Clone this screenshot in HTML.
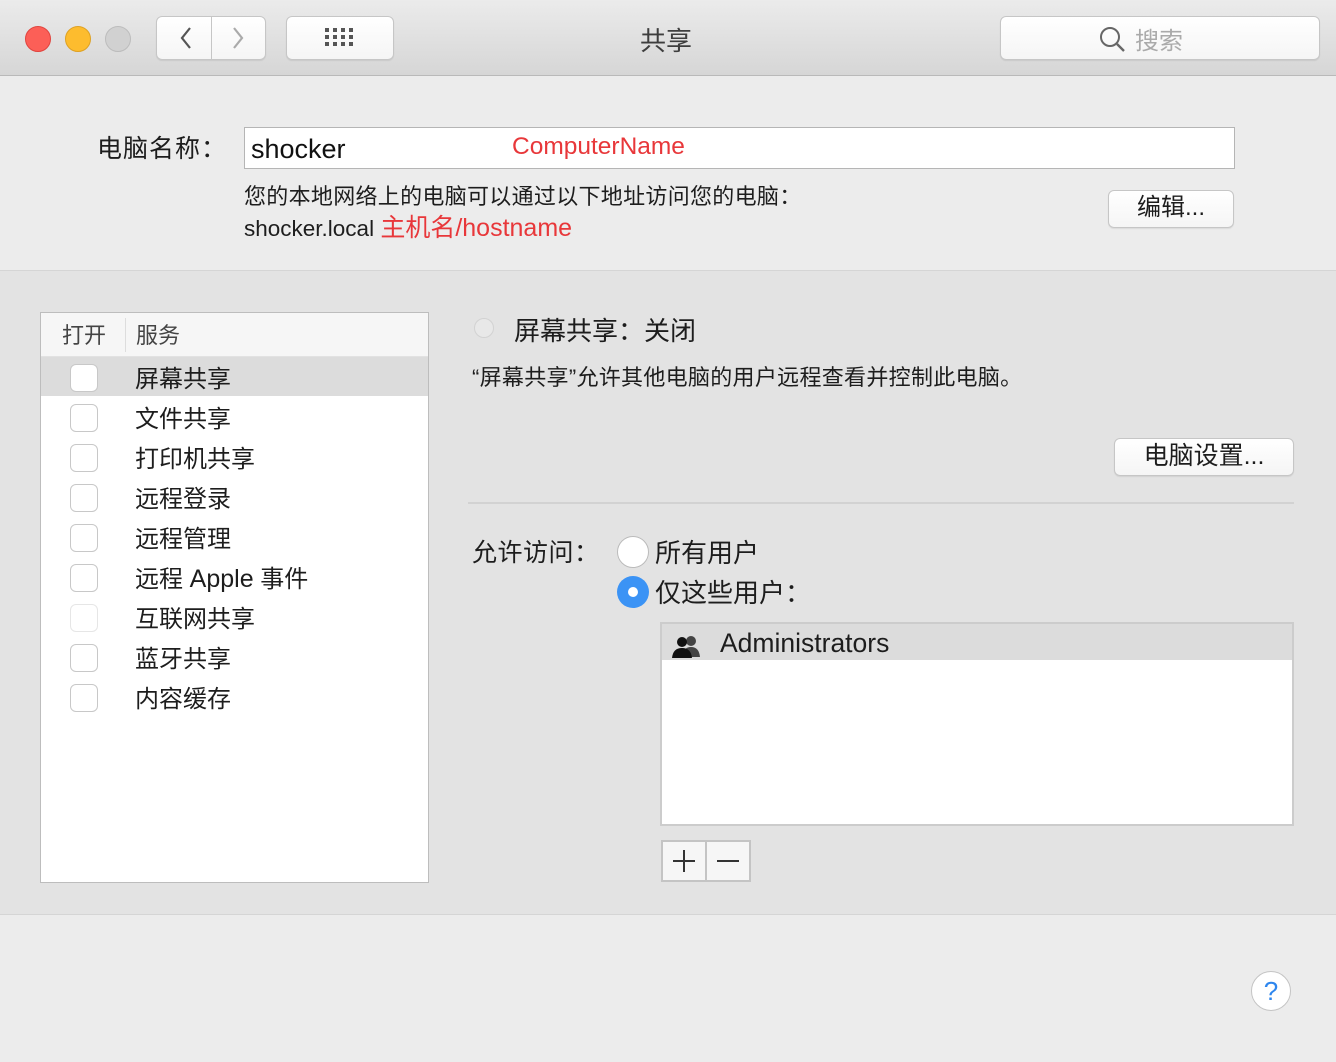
<!DOCTYPE html>
<html><head><meta charset="utf-8"><style>
*{margin:0;padding:0;box-sizing:border-box}
body{width:1336px;height:1062px;background:#ececec;font-family:"Liberation Sans","Noto Sans CJK SC",sans-serif;color:#1d1d1d;position:relative;overflow:hidden}
.a{position:absolute;white-space:nowrap}
.tb{left:0;top:0;width:1336px;height:76px;background:linear-gradient(#ebebeb,#d6d6d6);border-bottom:1px solid #b9b9b9}
.btn{background:linear-gradient(#fff,#f5f5f5);border:1px solid #c6c6c6;border-radius:6px;box-shadow:0 1px 1px rgba(0,0,0,.08)}
.dot{width:26px;height:26px;border-radius:50%;top:26px}
.cb{left:70px;width:28px;height:28px;background:#fff;border:1px solid #c8c8c8;border-radius:6px}
.it{left:135px;font-size:24px}
</style></head><body>
<div class="a tb"></div>
<div class="a dot" style="left:25px;background:#fc5f57;border:1px solid #e0443e"></div>
<div class="a dot" style="left:65px;background:#fdbc2e;border:1px solid #dea123"></div>
<div class="a dot" style="left:105px;background:#d1d1d1;border:1px solid #bcbcbc"></div>
<div class="a btn" style="left:156px;top:16px;width:110px;height:44px"></div>
<div class="a" style="left:211px;top:16px;width:1px;height:44px;background:#c6c6c6"></div>
<svg class="a" style="left:172px;top:24px" width="80" height="28"><path d="M18 4 L10 14 L18 24" stroke="#555" stroke-width="2.2" fill="none"/><path d="M62 4 L70 14 L62 24" stroke="#aaa" stroke-width="2.2" fill="none"/></svg>
<div class="a btn" style="left:286px;top:16px;width:108px;height:44px"></div>
<svg class="a" style="left:325px;top:28px" width="30" height="20"><g fill="#555"><rect x="0" y="0" width="4" height="4"/><rect x="8" y="0" width="4" height="4"/><rect x="16" y="0" width="4" height="4"/><rect x="24" y="0" width="4" height="4"/><rect x="0" y="7" width="4" height="4"/><rect x="8" y="7" width="4" height="4"/><rect x="16" y="7" width="4" height="4"/><rect x="24" y="7" width="4" height="4"/><rect x="0" y="14" width="4" height="4"/><rect x="8" y="14" width="4" height="4"/><rect x="16" y="14" width="4" height="4"/><rect x="24" y="14" width="4" height="4"/></g></svg>
<div class="a" style="left:640px;top:21px;font-size:26px;color:#3e3e3e">共享</div>
<div class="a btn" style="left:1000px;top:16px;width:320px;height:44px"></div>
<svg class="a" style="left:1099px;top:26px" width="28" height="28"><circle cx="11" cy="11" r="9" stroke="#666" stroke-width="2" fill="none"/><path d="M18 18 L25 25" stroke="#666" stroke-width="2.4"/></svg>
<div class="a" style="left:1135px;top:21px;font-size:24px;color:#aaa">搜索</div>

<div class="a" style="left:97px;top:129px;font-size:25px;letter-spacing:1px">电脑名称：</div>
<div class="a" style="left:244px;top:127px;width:991px;height:42px;background:#fff;border:1px solid #b5b5b5"></div>
<div class="a" style="left:251px;top:134px;font-size:27px;color:#111">shocker</div>
<div class="a" style="left:512px;top:133px;font-size:24.5px;color:#e8373a">ComputerName</div>
<div class="a" style="left:244px;top:179px;font-size:22px;letter-spacing:0.3px">您的本地网络上的电脑可以通过以下地址访问您的电脑：</div>
<div class="a" style="left:244px;top:208px;font-size:22.5px">shocker.local <span style="color:#e8373a;font-size:25px">主机名/hostname</span></div>
<div class="a btn" style="left:1108px;top:190px;width:126px;height:38px;font-size:24px;text-align:center;line-height:34px">编辑...</div>

<div class="a" style="left:0;top:270px;width:1336px;height:645px;background:#e3e3e3;border-top:1px solid #d5d5d5;border-bottom:1px solid #d5d5d5"></div>
<div class="a" style="left:40px;top:312px;width:389px;height:571px;background:#fff;border:1px solid #bdbdbd"></div>
<div class="a" style="left:41px;top:313px;width:387px;height:44px;background:#f6f6f6;border-bottom:1px solid #e2e2e2"></div>
<div class="a" style="left:125px;top:318px;width:1px;height:34px;background:#ddd"></div>
<div class="a" style="left:62px;top:318px;font-size:22px;color:#444">打开</div>
<div class="a" style="left:136px;top:318px;font-size:22px;color:#444">服务</div>
<div class="a" style="left:41px;top:357px;width:387px;height:39px;background:#dcdcdc"></div>
<div class="a cb" style="top:364px"></div><div class="a it" style="top:359px">屏幕共享</div>
<div class="a cb" style="top:404px"></div><div class="a it" style="top:399px">文件共享</div>
<div class="a cb" style="top:444px"></div><div class="a it" style="top:439px">打印机共享</div>
<div class="a cb" style="top:484px"></div><div class="a it" style="top:479px">远程登录</div>
<div class="a cb" style="top:524px"></div><div class="a it" style="top:519px">远程管理</div>
<div class="a cb" style="top:564px"></div><div class="a it" style="top:559px">远程 <span style="font-size:25px">Apple</span> 事件</div>
<div class="a cb" style="top:604px;border-color:#e6e6e6"></div><div class="a it" style="top:599px">互联网共享</div>
<div class="a cb" style="top:644px"></div><div class="a it" style="top:639px">蓝牙共享</div>
<div class="a cb" style="top:684px"></div><div class="a it" style="top:679px">内容缓存</div>

<div class="a" style="left:474px;top:318px;width:20px;height:20px;border-radius:50%;background:#e8e8e8;border:1px solid #d2d2d2"></div>
<div class="a" style="left:514px;top:311px;font-size:26px">屏幕共享：关闭</div>
<div class="a" style="left:472px;top:360px;font-size:22px;letter-spacing:0.3px">“屏幕共享”允许其他电脑的用户远程查看并控制此电脑。</div>
<div class="a btn" style="left:1114px;top:438px;width:180px;height:38px;font-size:25px;text-align:center;line-height:34px">电脑设置...</div>
<div class="a" style="left:468px;top:502px;width:826px;height:2px;background:#d2d2d2"></div>
<div class="a" style="left:472px;top:533px;font-size:25px;letter-spacing:0.5px">允许访问：</div>
<div class="a" style="left:617px;top:536px;width:32px;height:32px;border-radius:50%;background:#fff;border:1px solid #bbb"></div>
<div class="a" style="left:655px;top:533px;font-size:26px">所有用户</div>
<div class="a" style="left:617px;top:576px;width:32px;height:32px;border-radius:50%;background:#3b93f5"></div>
<div class="a" style="left:628px;top:587px;width:10px;height:10px;border-radius:50%;background:#fff"></div>
<div class="a" style="left:655px;top:573px;font-size:26px">仅这些用户：</div>
<div class="a" style="left:660px;top:622px;width:634px;height:204px;background:#fff;border:2px solid #ccc"></div>
<div class="a" style="left:662px;top:624px;width:630px;height:36px;background:#dcdcdc"></div>
<svg class="a" style="left:671px;top:635px" width="34" height="24"><circle cx="20" cy="6" r="5" fill="#444"/><path d="M11 22 Q12 12 20 12 Q28 12 29 22Z" fill="#444"/><circle cx="11" cy="7" r="5" fill="#111"/><path d="M1 23 Q2 13 11 13 Q20 13 21 23Z" fill="#111"/></svg>
<div class="a" style="left:720px;top:628px;font-size:26.5px">Administrators</div>
<div class="a" style="left:661px;top:840px;width:90px;height:42px;background:#f6f6f6;border:2px solid #c4c4c4"></div>
<div class="a" style="left:705px;top:842px;width:2px;height:38px;background:#c4c4c4"></div>
<svg class="a" style="left:663px;top:842px" width="86" height="38"><path d="M21 8 V30 M10 19 H32" stroke="#333" stroke-width="2"/><path d="M54 19 H76" stroke="#333" stroke-width="2"/></svg>

<div class="a" style="left:1251px;top:971px;width:40px;height:40px;border-radius:50%;background:#fff;border:1px solid #c4c4c4;color:#2e86ee;font-size:26px;text-align:center;line-height:38px">?</div>
</body></html>
